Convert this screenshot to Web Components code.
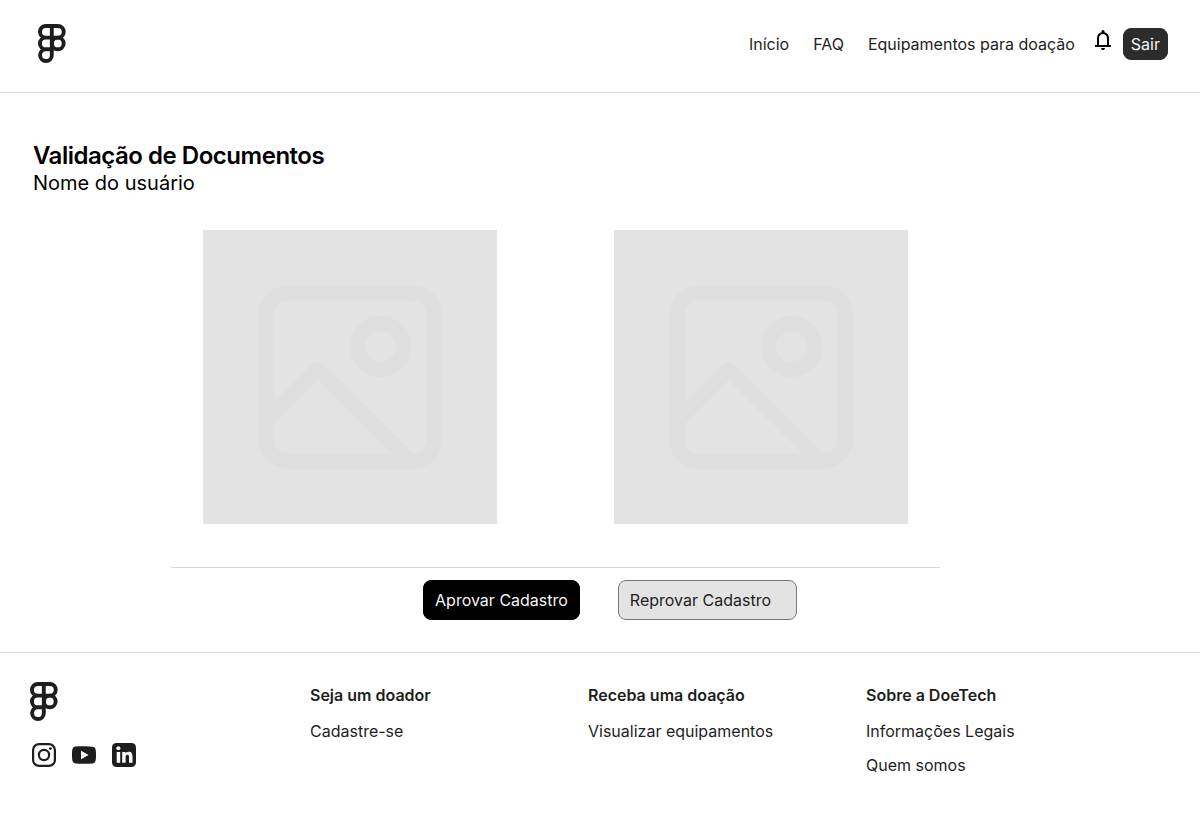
<!DOCTYPE html>
<html lang="pt-BR">
<head>
<meta charset="utf-8">
<meta name="viewport" content="width=device-width, initial-scale=1">
<title>Validação de Documentos</title>
<style>
  body { margin: 0; background: #fff; color: #1e1e1e; font: 400 16px/22px Inter, "Liberation Sans", sans-serif; }
</style>
</head>
<body>
<doe-header></doe-header>
<doe-validation>
  <span slot="title">Validação de Documentos</span>
  <span slot="user">Nome do usuário</span>
  <doe-document label="Documento 1"></doe-document>
  <doe-document label="Documento 2"></doe-document>
  <doe-button slot="actions" variant="approve">Aprovar Cadastro</doe-button>
  <doe-button slot="actions" variant="reject">Reprovar Cadastro</doe-button>
</doe-validation>
<doe-footer></doe-footer>

<script>
function define(name, html, setup) {
  const template = document.createElement('template');
  template.innerHTML = html;
  customElements.define(name, class extends HTMLElement {
    constructor() {
      super();
      this.attachShadow({ mode: 'open' }).append(template.content.cloneNode(true));
    }
    connectedCallback() { if (setup) setup(this, this.shadowRoot); }
  });
}

define('doe-logo', `
<style>:host{display:block;width:28px;height:39px} svg{display:block}</style>
<svg width="28" height="39" viewBox="0 0 28 39" fill="none" stroke="#1e1e1e" stroke-width="3.9" aria-hidden="true">
  <path d="M7.8 1.95H19.9a5.85 5.85 0 0 1 0 11.7H7.8a5.85 5.85 0 0 1 0-11.7ZM13.8 13.6H7.8a5.85 5.85 0 0 0 0 11.7h6M13.8 25.3H7.8a5.85 5.85 0 1 0 6 5.85V1.9"/>
  <circle cx="19.8" cy="19.45" r="5.85"/>
</svg>`);

define('doe-button', `
<style>
  :host{display:block}
  button{display:block;box-sizing:border-box;margin:0;font:inherit;line-height:22px;border:1px solid #2c2c2c;border-radius:8px;background:#2c2c2c;color:#f5f5f5;padding:4px 7px;white-space:nowrap;cursor:pointer}
  :host([variant=approve]) button{background:#000;border-color:#000;padding:8px 11px}
  :host([variant=reject]) button{background:#e3e3e3;border-color:#767676;color:#1e1e1e;padding:8px 25px 8px 11px}
</style>
<button type="button"><slot></slot></button>`);

define('doe-header', `
<style>
  :host{display:block;border-bottom:1px solid #d9d9d9}
  header{display:flex;justify-content:space-between;align-items:flex-start;padding:24px 32px 29px 38px}
  nav{display:flex;align-items:center;gap:24px;padding-top:4px}
  a{color:inherit;text-decoration:none}
  .account{display:flex;align-items:flex-start;gap:8px;margin-left:-8px}
  .bell{border:0;background:none;padding:0;width:24px;height:24px;cursor:pointer}
  svg{display:block}
</style>
<header>
  <a href="#" aria-label="DoeTech"><doe-logo></doe-logo></a>
  <nav>
    <a href="#">Início</a><a href="#">FAQ</a><a href="#">Equipamentos para doação</a>
    <div class="account">
      <button class="bell" type="button" aria-label="Notificações">
        <svg width="24" height="24" viewBox="0 0 24 24" fill="#000"><path d="M4 19v-2h2v-7q0-2.075 1.25-3.6875T10.5 4.2v-.7q0-.625.4375-1.0625T12 2t1.0625.4375T13.5 3.5v.7q2 .5 3.25 2.1125T18 10v7h2v2H4Zm8 3q-.825 0-1.4125-.5875T10 20h4q0 .825-.5875 1.4125T12 22Zm-4-5h8v-7q0-1.65-1.175-2.825T12 6 9.175 7.175 8 10v7Z"/></svg>
      </button>
      <doe-button>Sair</doe-button>
    </div>
  </nav>
</header>`);

define('doe-document', `
<style>
  :host{display:block;background:#e3e3e3;aspect-ratio:1}
  svg{display:block;width:100%;height:100%}
</style>
<svg viewBox="0 0 294 294" role="img" fill="none" stroke="#dfdfdf" stroke-width="15.3" stroke-linejoin="round">
  <rect x="63" y="63" width="168.4" height="168.4" rx="22"/>
  <circle cx="177.6" cy="116.5" r="23"/>
  <path d="M63 191 114.5 139.5 207 231"/>
</svg>`, (host, root) => root.querySelector('svg').setAttribute('aria-label', host.getAttribute('label')));

define('doe-validation', `
<style>
  :host{display:block}
  main{padding:48px 0 32px}
  .head{padding:0 33px}
  h1{margin:0;color:#000;font-size:24px;line-height:29px;font-weight:600;letter-spacing:-0.02em}
  p{margin:0;color:#000;font-size:20px;line-height:26px}
  .panel{margin:34px 260px 0 171px}
  .docs{display:grid;grid-template-columns:1fr 1fr;gap:117px;padding:0 32px 43px;border-bottom:1px solid #d9d9d9}
  .actions{display:flex;justify-content:flex-end;gap:38px;padding:12px 143px 0 0}
</style>
<main>
  <div class="head"><h1><slot name="title"></slot></h1><p><slot name="user"></slot></p></div>
  <section class="panel">
    <div class="docs"><slot></slot></div>
    <div class="actions"><slot name="actions"></slot></div>
  </section>
</main>`);

define('doe-links', `
<style>
  :host{display:block}
  h2{margin:0 0 14px;font-size:16px;line-height:22px;font-weight:600}
  ul{list-style:none;margin:0;padding:0;display:grid;gap:12px}
</style>
<h2><slot name="title"></slot></h2>
<ul><slot></slot></ul>`);

define('doe-link', `
<style>:host{display:list-item;list-style:none} a{color:inherit;text-decoration:none}</style>
<a href="#"><slot></slot></a>`);

define('doe-social', `
<style>
  :host{display:flex;gap:16px}
  a,svg{display:block}
</style>
<a href="#" aria-label="Instagram"><svg width="24" height="24" viewBox="0 0 24 24" fill="none" stroke="#1e1e1e" stroke-width="2.2"><rect x="1.1" y="1.1" width="21.8" height="21.8" rx="6"/><circle cx="12" cy="12" r="5.1"/><circle cx="18.4" cy="5.6" r="1.45" fill="#1e1e1e" stroke="none"/></svg></a>
<a href="#" aria-label="YouTube"><svg width="24" height="24" viewBox="0 0 24 24" fill="#1e1e1e"><path fill-rule="evenodd" d="M23.76 7.2s-.23-1.66-.95-2.38c-.91-.96-1.93-.96-2.4-1.01C17.04 3.2 12 3.2 12 3.2s-5.04 0-8.4.25c-.47.05-1.49.06-2.4 1.01C.48 5.54.24 7.2.24 7.2S0 9.14 0 11.08v1.82c0 1.95.24 3.89.24 3.89s.24 1.66.95 2.38c.92.96 2.12 1.2 2.65 1.3 1.92.25 8.16.33 8.16.33s5.04-.01 8.4-.25c.47-.06 1.49-.33 2.4-1.38.72-.72.96-2.38.96-2.38s.24-1.94.24-3.89v-1.82c0-1.94-.24-3.88-.24-3.88ZM9 7.8v8.4l7.600-4.200Z"/></svg></a>
<a href="#" aria-label="LinkedIn"><svg width="24" height="24" viewBox="0 0 24 24"><rect width="24" height="24" rx="4.5" fill="#1e1e1e"/><g fill="#fff"><circle cx="6.4" cy="5.3" r="2"/><path d="M4.7 9h3.500v10.800H4.700ZM10.200 9h3.300v1.500c.5-.9 1.600-1.700 3.100-1.700 3.200 0 3.900 2.100 3.900 4.900v6.100h-3.500v-5.400c0-1.300 0-2.700-1.600-2.700s-1.800 1.300-1.800 2.600v5.500h-3.400Z"/></g></svg></a>`);

define('doe-footer', `
<style>
  :host{display:block;border-top:1px solid #d9d9d9}
  footer{display:grid;grid-template-columns:repeat(4,1fr);gap:16px;padding:29px 72px 32px 32px}
  .brand{display:grid;gap:22px;align-content:start}
  .brand>a{margin-left:-2px}
  doe-links{padding-top:2px}
</style>
<footer>
  <div class="brand"><a href="#" aria-label="DoeTech"><doe-logo></doe-logo></a><doe-social></doe-social></div>
  <doe-links><span slot="title">Seja um doador</span><doe-link>Cadastre-se</doe-link></doe-links>
  <doe-links><span slot="title">Receba uma doação</span><doe-link>Visualizar equipamentos</doe-link></doe-links>
  <doe-links><span slot="title">Sobre a DoeTech</span><doe-link>Informações Legais</doe-link><doe-link>Quem somos</doe-link></doe-links>
</footer>`);
</script>
</body>
</html>
